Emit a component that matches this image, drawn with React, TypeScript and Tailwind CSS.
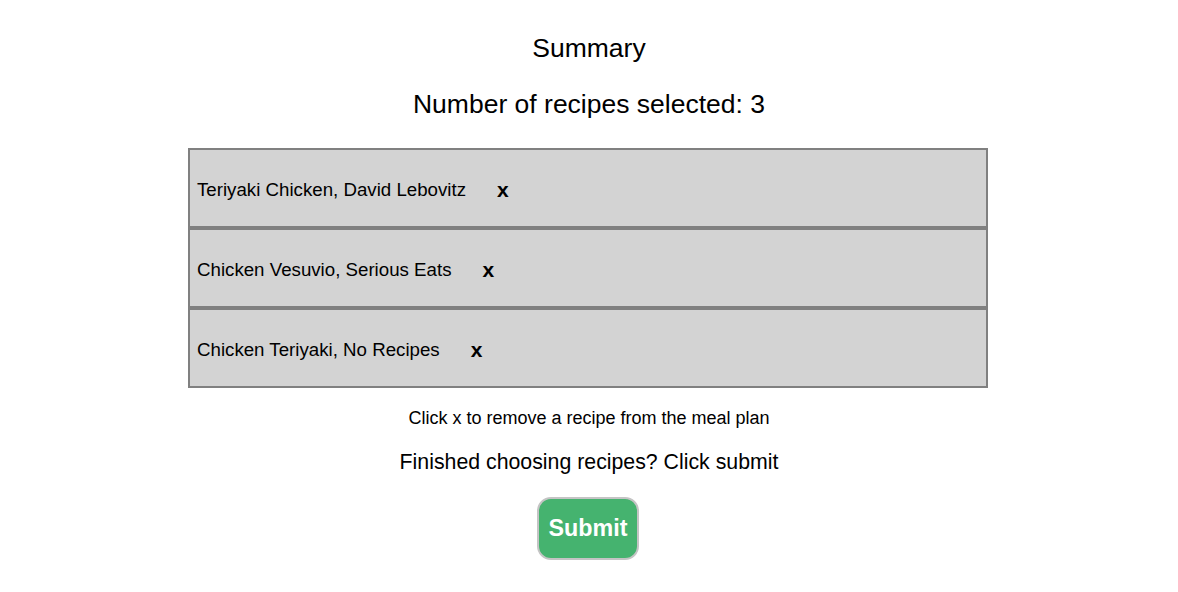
import React from "react";

const recipes = [
  { name: "Teriyaki Chicken, David Lebovitz" },
  { name: "Chicken Vesuvio, Serious Eats" },
  { name: "Chicken Teriyaki, No Recipes" },
];

export default function App() {
  return (
    <div
      className="min-h-[592px] w-full bg-white text-black flex flex-col items-center"
      style={{ fontFamily: '"Liberation Sans", Arial, Helvetica, sans-serif' }}
    >
      <h1 className="mt-[32px] text-[26.5px] leading-[32px] font-normal">Summary</h1>
      <h2 className="mt-[24px] text-[26.5px] leading-[32px] font-normal">
        Number of recipes selected: 3
      </h2>
      <ul className="mt-[28px] mr-[2px] w-[800px] flex flex-col">
        {recipes.map((r) => (
          <li
            key={r.name}
            className="h-[80px] border-2 border-[#808080] bg-[#d3d3d3] flex items-center pl-[7px] pt-[4px] text-[18.7px] leading-[24px]"
          >
            <span>{r.name}</span>
            <span className="ml-[31px] font-bold text-[21px] leading-[24px]">x</span>
          </li>
        ))}
      </ul>
      <p className="mt-[19px] text-[18px] leading-[22px]">
        Click x to remove a recipe from the meal plan
      </p>
      <p className="mt-[20px] text-[21.3px] leading-[26px]">
        Finished choosing recipes? Click submit
      </p>
      <button className="mt-[22px] mr-[2px] w-[102px] h-[63px] rounded-[14px] border-2 border-[#c4c4c4] bg-[#45b36f] text-white font-bold text-[23.3px]">
        Submit
      </button>
    </div>
  );
}
